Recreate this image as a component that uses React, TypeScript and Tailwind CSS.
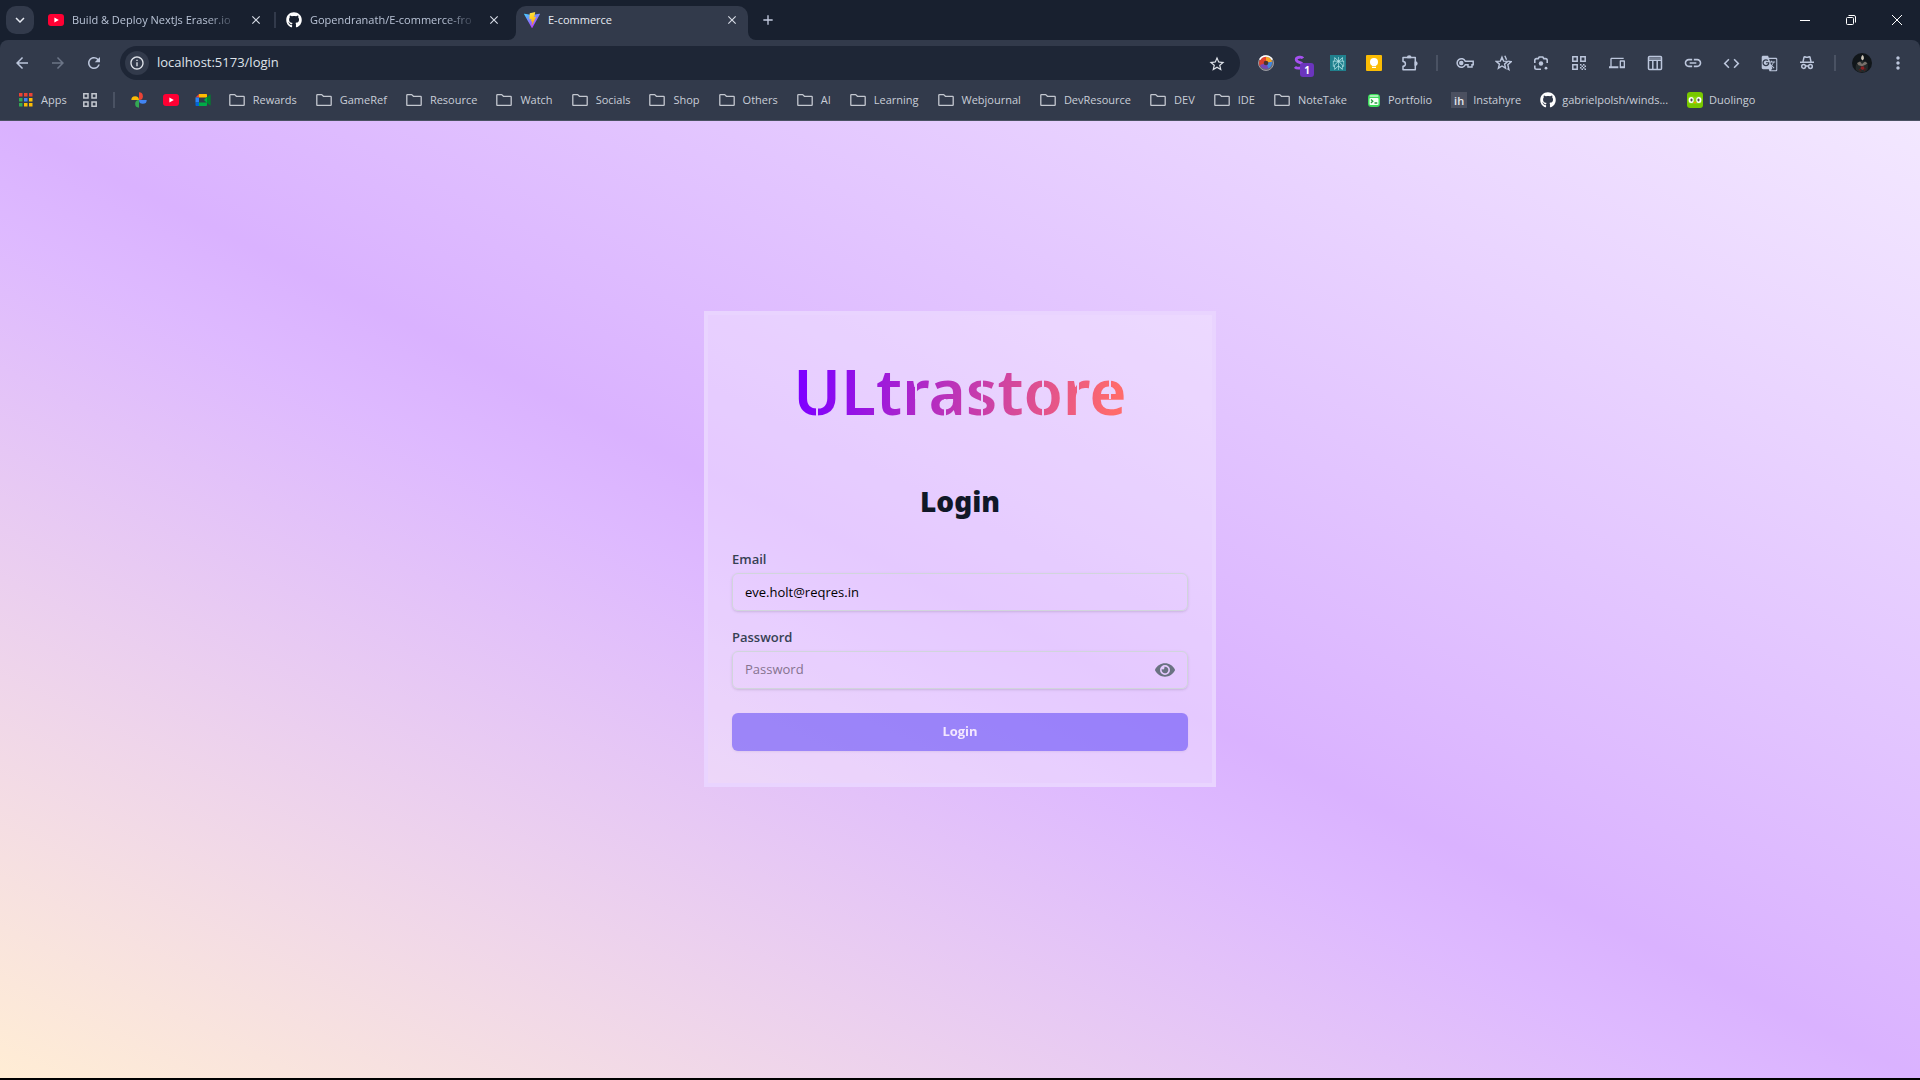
import { useState } from "react";
import type { ReactNode } from "react";
import { FaEye, FaGithub } from "react-icons/fa";
import {
  MdClose,
  MdCode,
  MdDevices,
  MdGTranslate,
  MdLink,
  MdOutlineInfo,
  MdRefresh,
  MdStarBorder,
  MdMoreVert,
  MdArrowBack,
  MdArrowForward,
  MdKeyboardArrowDown,
  MdAdd,
} from "react-icons/md";
import { SiPerplexity } from "react-icons/si";

const YouTubeIcon = () => (
  <svg viewBox="0 0 16 16" className="size-4 shrink-0" aria-hidden="true">
    <rect y="2" width="16" height="12" rx="3" fill="#ff0033" />
    <path d="M6.4 5.5v5L10.8 8z" fill="#fff" />
  </svg>
);

const ViteIcon = () => (
  <svg viewBox="0 0 16 16" className="size-4 shrink-0" aria-hidden="true">
    <defs>
      <linearGradient id="viteBody" x1="0" y1="0" x2="0.6" y2="1">
        <stop offset="0" stopColor="#41d1ff" />
        <stop offset="1" stopColor="#bd34fe" />
      </linearGradient>
      <linearGradient id="viteBolt" x1="0" y1="0" x2="0.2" y2="1">
        <stop offset="0" stopColor="#ffea83" />
        <stop offset="0.2" stopColor="#ffdd35" />
        <stop offset="1" stopColor="#ffa800" />
      </linearGradient>
    </defs>
    <path d="M15.9 2.3 8.4 15.7a.4.4 0 0 1-.7 0L.1 2.3c-.2-.3.1-.7.4-.6L8 3l7.4-1.3c.4 0 .7.3.5.6z" fill="url(#viteBody)" />
    <path d="M11.4.1 5.9 1.2a.2.2 0 0 0-.2.2l-.3 5.7c0 .1.1.2.3.2l1.5-.4c.1 0 .3.1.2.3l-.4 2.2c0 .2.1.3.2.2l1-.3c.1 0 .3.1.2.3l-.7 3.5c0 .2.2.3.3.1l4-8.2c.1-.1 0-.3-.2-.3l-1.5.3c-.2 0-.3-.1-.2-.3l1-3.3c0-.1-.1-.3-.3-.2z" fill="url(#viteBolt)" />
  </svg>
);

const FolderIcon = () => (
  <svg viewBox="0 0 16 16" className="size-4 shrink-0" fill="none" stroke="#c3c7cf" strokeWidth="1.3" strokeLinejoin="round" aria-hidden="true">
    <path d="M.8 3.2c0-.4.2-.6.6-.6h4.300l1.700 1.700h7.200c.4 0 .6.200.6.600v7.900c0 .4-.2.600-.6.600H1.400c-.4 0-.6-.2-.6-.6z" />
  </svg>
);

const APP_COLORS = ["#ea4335", "#ea4335", "#ea4335", "#34a853", "#4285f4", "#fbbc04", "#34a853", "#fbbc04", "#fbbc04"];

const AppsIcon = () => (
  <svg viewBox="0 0 14 14" className="size-3.5 shrink-0" aria-hidden="true">
    {APP_COLORS.map((c, i) => (
      <rect key={i} x={(i % 3) * 5} y={Math.floor(i / 3) * 5} width="3.5" height="3.5" fill={c} />
    ))}
  </svg>
);

const GridIcon = () => (
  <svg viewBox="0 0 14 14" className="size-3.5 shrink-0" fill="none" stroke="#c3c7cf" strokeWidth="1.5" aria-hidden="true">
    <path d="M.8.8h4.200v4.200H.8zM9 .8h4.200v4.200H9zM.8 9h4.200v4.200H.8zM9 9h4.200v4.200H9z" />
  </svg>
);

const PhotosIcon = () => (
  <svg viewBox="0 0 16 16" className="size-4 shrink-0" aria-hidden="true">
    <path d="M8 .3A3.850 3.850 0 0 1 8 8z" fill="#ea4335" />
    <path d="M.3 8A3.850 3.850 0 0 1 8 8z" fill="#fbbc04" />
    <path d="M8 15.700A3.850 3.850 0 0 1 8 8z" fill="#34a853" />
    <path d="M15.700 8A3.850 3.850 0 0 1 8 8z" fill="#4285f4" />
  </svg>
);

const MeetIcon = () => (
  <svg viewBox="0 0 16 16" className="size-4 shrink-0" aria-hidden="true">
    <path d="M4 2 .5 5.5H4z" fill="#ea4335" />
    <path d="M.5 5.5H4v5H.5z" fill="#2684fc" />
    <path d="M.5 10.5H4V14H1.600C1 14 .5 13.500.5 12.900z" fill="#0066da" />
    <path d="M4 2h7c.6 0 1 .4 1 1v2.500H4z" fill="#ffba00" />
    <path d="M4 10.5h8V13c0 .6-.4 1-1 1H4z" fill="#00ac47" />
    <path d="M12 5 15 2.700c.3-.2.600 0 .6.300v10c0 .4-.3.500-.6.300L12 11V10.500L9 8z" fill="#00832d" />
    <path d="M12 5v6L9 8z" fill="#00ac47" />
  </svg>
);

const PortfolioIcon = () => (
  <svg viewBox="0 0 16 16" className="size-4 shrink-0" aria-hidden="true">
    <rect x="2" y="2" width="12" height="13" rx="3.5" fill="#3ddc5b" />
    <rect x="3.500" y="3.300" width="9" height="1.500" rx=".7" fill="#c9f7d1" />
    <rect x="3.500" y="6" width="9" height="7" rx="1" fill="#f3fff5" />
    <path d="m5 7.500 1.800 1.700L5 11M8.500 11h2.800" stroke="#289c42" strokeWidth="1.300" fill="none" />
  </svg>
);

const InstahyreIcon = () => (
  <span className="grid size-4 shrink-0 place-items-center bg-[#4b5060] text-[11px] leading-none font-semibold text-gray-200" aria-hidden="true">
    ih
  </span>
);

const DuolingoIcon = () => (
  <svg viewBox="0 0 16 16" className="size-4 shrink-0" aria-hidden="true">
    <rect width="16" height="16" rx="3" fill="#78c800" />
    <path d="M.8 8c0-2.400 1.300-4 3.500-4C6 4 7 5 8 5s2-1 3.700-1c2.200 0 3.500 1.600 3.500 4 0 2.300-1.300 4-3.500 4-1.600 0-2.500-.8-3.700-.8S5.900 12 4.300 12C2.100 12 .8 10.300.8 8z" fill="#8ad60f" />
    <rect x="1.700" y="5" width="5" height="6" rx="2.500" fill="#fff" />
    <rect x="9.300" y="5" width="5" height="6" rx="2.500" fill="#fff" />
    <rect x="3.500" y="6.500" width="2" height="3" rx="1" fill="#4b4b4b" />
    <rect x="10.500" y="6.500" width="2" height="3" rx="1" fill="#4b4b4b" />
    <path d="M6.500 9.700h3L8 12z" fill="#ff9600" />
  </svg>
);

const LensBallIcon = () => (
  <svg viewBox="0 0 16 16" className="size-4" aria-hidden="true">
    <circle cx="8" cy="8" r="7.500" fill="#6a6a70" stroke="#9a9ba3" strokeWidth="1" />
    <path d="M8 8 2 11.500A7 7 0 0 1 3 3.500z" fill="#d9402f" />
    <path d="M3 3.500A7 7 0 0 1 9.500 1.600L8 8z" fill="#e8432e" />
    <path d="M8 1.800c3 0 5.500 2 6 5L8 8z" fill="#f5a623" />
    <path d="M14 6.800c.3 3-1.300 5.600-4 6.700L8 8z" fill="#3f86e0" />
    <path d="M10.500 13.500C7 14.500 3.500 13.500 2 10l6-2z" fill="#7747b8" />
    <circle cx="8" cy="8" r="2.300" fill="#4a3330" />
    <path d="M1.800 4.700A7 7 0 0 1 14.200 4.700" fill="none" stroke="#fff" strokeWidth="1.600" />
  </svg>
);

const SwirlIcon = () => (
  <span className="relative block size-4" aria-hidden="true">
    <svg viewBox="0 0 16 16" className="size-4" fill="none" stroke="#a550f0" strokeWidth="2.800">
      <path d="M9 3.200C8 1.800 2.200 1.600 2.200 4.600c0 3.600 6.500 2 6.500 5.600 0 3.300-5.700 3.800-7.700 1.700" />
    </svg>
    <span className="absolute top-2 left-1.5 grid size-3.5 place-items-center rounded-[3px] bg-[#6b35bd] text-[10px] leading-none font-bold text-white">
      1
    </span>
  </span>
);

const PerplexityIcon = () => (
  <span className="grid size-4 place-items-center bg-[#20808d] text-[#b9e6ea]">
    <SiPerplexity size={13} />
  </span>
);

const KeepIcon = () => (
  <svg viewBox="0 0 16 16" className="size-4" aria-hidden="true">
    <rect width="16" height="16" rx="1" fill="#fbbc04" />
    <circle cx="8" cy="7" r="4" fill="#fff" />
    <path d="M6 10h4v1.200H6zM6 12h4v1H6z" fill="#fff" />
  </svg>
);

const PuzzleIcon = () => (
  <svg viewBox="0 0 16 16" className="size-4" fill="none" stroke="currentColor" strokeWidth="1.500" strokeLinejoin="round" aria-hidden="true">
    <path d="M1 2.500h12.300v12.300H1v-3.500a2.400 2.400 0 0 0 0-4.800z" />
    <path d="M5.600 2.500a1.600 1.600 0 0 1 3.200 0zM13.300 7a1.600 1.600 0 0 1 0 3.200z" fill="currentColor" />
  </svg>
);

const KeyIcon = () => (
  <svg viewBox="0 0 18 18" className="size-[18px]" fill="none" stroke="currentColor" strokeWidth="1.500" aria-hidden="true">
    <path d="M9.300 7.200A4.300 4.300 0 1 0 9.300 10.800H12V13h4v-2.200h1.200V7.200z" />
    <circle cx="5.300" cy="9" r="1.500" fill="currentColor" />
  </svg>
);

const StarsIcon = () => (
  <svg viewBox="0 0 17 16" className="h-4 w-[17px]" fill="none" stroke="currentColor" strokeWidth="1.400" aria-hidden="true">
    <path d="m7 2.200 1.600 3.900 4.200.3-3.200 2.700 1 4.100L7 11l-3.600 2.200 1-4.100L1.200 6.400l4.200-.3z" />
    <path d="m9.800.8 1.800 4M13.300 6.400l2.900.3-3.400 3 1.100 4.900-1.500-.9" />
  </svg>
);

const LensSearchIcon = () => (
  <svg viewBox="0 0 16 16" className="size-4" fill="none" stroke="currentColor" strokeWidth="1.600" aria-hidden="true">
    <path d="M1.800 8V5.300c0-1 .7-1.700 1.700-1.700h1.700L6.200 2h3.600l1 1.600h1.700c1 0 1.700.7 1.700 1.700V8M1.800 10.500v2c0 1 .7 1.700 1.700 1.700H8" />
    <circle cx="8" cy="8.500" r="2.200" fill="currentColor" stroke="none" />
    <circle cx="13" cy="13.200" r="1.400" fill="currentColor" stroke="none" />
  </svg>
);

const QrIcon = () => (
  <svg viewBox="0 0 14 14" className="size-3.5" fill="none" stroke="currentColor" strokeWidth="1.500" aria-hidden="true">
    <path d="M.8.8h4.400v4.400H.8zM8.800.8h4.400v4.400H8.800zM.8 8.800h4.400v4.400H.8z" />
    <path d="M8 8h1.500v1.500H8zM11 8h1.500v1.500H11zM9.500 9.500H11V11H9.500zM12.500 9.500H14V11h-1.500zM8 11h1.500v1.500H8zM11 11h1.500v1.500H11zM9.500 12.500H11V14H9.500zM12.500 12.500H14V14h-1.500z" fill="currentColor" stroke="none" />
  </svg>
);

const ReadingIcon = () => (
  <svg viewBox="0 0 16 16" className="size-4" fill="none" stroke="currentColor" strokeWidth="1.500" aria-hidden="true">
    <rect x="1.500" y="1.500" width="13" height="13" rx="1" />
    <path d="M1.500 5.200h13M5.800 5.200v9.300M10.200 5.200v9.300" />
    <path d="M2 3.300h12" strokeOpacity="0.500" />
  </svg>
);

const IncognitoIcon = () => (
  <svg viewBox="0 0 16 16" className="size-4" fill="none" stroke="currentColor" strokeWidth="1.500" aria-hidden="true">
    <path d="M1 7.200h14M4 6.800l1-4.600c.1-.4.400-.5.800-.4l1.200.5h2l1.200-.5c.4-.1.700 0 .8.400l1 4.600" />
    <circle cx="4.600" cy="11.500" r="1.900" />
    <circle cx="11.400" cy="11.500" r="1.900" />
    <path d="M6.500 11h3" />
  </svg>
);

const Avatar = () => (
  <svg viewBox="0 0 20 20" className="size-5" aria-hidden="true">
    <circle cx="10" cy="10" r="10" fill="#11161a" />
    <path d="M4 17c-1-4 0-6 2.500-7.500L9 8l2 .2 3 1.300c2 1.500 2.500 3.500 1.500 7.500l-3 2.200H7z" fill="#242a2b" />
    <path d="M10.500 2c1.300 1 1.600 2.500 1.300 4L10.500 7.500 9.200 6c-.2-1.700.3-3 1.300-4z" fill="#cfc8bb" />
    <path d="m5 10 3-1.500L10 11l3-2.500 2.500 1.800-2 1.500-3.500 1.500-3.500-1z" fill="#77706a" />
    <path d="M9 13.500h3l.5 2.500-2 1-2-1.200z" fill="#8c2023" />
    <path d="m7 16 2 2.500M13.500 15l-1 3" stroke="#551a1c" />
  </svg>
);

type TabProps = { icon: ReactNode; title: string; active?: boolean };

function Tab({ icon, title, active = false }: TabProps) {
  return (
    <div className="flex h-full w-full min-w-0 items-center gap-2">
      {icon}
      <span
        className={
          active
            ? "min-w-0 flex-1 text-[#e6eaf2]"
            : "min-w-0 flex-1 [mask-image:linear-gradient(to_right,black_80%,transparent)] whitespace-nowrap text-[#b9c3d6]"
        }
      >
        {title}
      </span>
      <button type="button" aria-label={`Close ${title}`} className="grid size-4 shrink-0 place-items-center text-[#d5dae4]">
        <MdClose size={14} />
      </button>
    </div>
  );
}

function TabStrip() {
  return (
    <div className="flex h-10 items-stretch bg-[#18202f] text-[11px]">
      <div className="flex flex-1 items-stretch">
        <button type="button" aria-label="Search tabs" className="mt-1.5 ml-1.5 grid size-7 place-items-center rounded-[10px] bg-[#323a4b] text-[#e6eaf2]">
          <MdKeyboardArrowDown size={18} />
        </button>
        <div className="ml-3.5 w-[216px]">
          <Tab icon={<YouTubeIcon />} title="Build & Deploy NextJs Eraser.io" />
        </div>
        <div className="mx-2.5 h-4 w-0.5 self-center bg-[#323a4b]" />
        <div className="w-[216px]">
          <Tab icon={<FaGithub size={16} className="shrink-0 text-white" />} title="Gopendranath/E-commerce-fro" />
        </div>
        <div className="ml-1.5 flex w-2 flex-col justify-end bg-[#323a4b]">
          <div className="h-full rounded-br-[10px] bg-[#18202f]" />
        </div>
        <div className="flex w-[232px] items-end bg-[#18202f]">
          <div className="h-[34px] w-full rounded-t-[10px] bg-[#323a4b] pr-2 pb-1.5 pl-2">
            <Tab icon={<ViteIcon />} title="E-commerce" active />
          </div>
        </div>
        <div className="w-2 bg-[#323a4b]">
          <div className="h-full rounded-bl-[10px] bg-[#18202f]" />
        </div>
        <button type="button" aria-label="New tab" className="ml-0.5 grid w-5 place-items-center text-[#c3cbe0]">
          <MdAdd size={16} />
        </button>
      </div>
      <div className="flex text-white">
        <button type="button" aria-label="Minimize" className="grid w-[46px] place-items-center">
          <svg viewBox="0 0 10 10" className="size-2.5" stroke="currentColor"><path d="M0 5.500h10" /></svg>
        </button>
        <button type="button" aria-label="Restore" className="grid w-[46px] place-items-center">
          <svg viewBox="0 0 10 10" className="size-2.5" fill="none" stroke="currentColor">
            <rect x=".5" y="2.500" width="7" height="7" rx="1" />
            <path d="M2.500.5H8A1.500 1.500 0 0 1 9.500 2v5.500" />
          </svg>
        </button>
        <button type="button" aria-label="Close window" className="grid w-[46px] place-items-center">
          <svg viewBox="0 0 10 10" className="size-2.5" stroke="currentColor"><path d="m0 0 10 10M10 0 0 10" /></svg>
        </button>
      </div>
    </div>
  );
}

const EXTENSIONS = [
  { label: "Lens", icon: <LensBallIcon /> },
  { label: "Shortcuts", icon: <SwirlIcon /> },
  { label: "Perplexity", icon: <PerplexityIcon /> },
  { label: "Keep", icon: <KeepIcon /> },
  { label: "Extensions", icon: <PuzzleIcon /> },
];

const TOOLS = [
  { label: "Passwords", icon: <KeyIcon /> },
  { label: "Bookmarks", icon: <StarsIcon /> },
  { label: "Search with Lens", icon: <LensSearchIcon /> },
  { label: "QR code", icon: <QrIcon /> },
  { label: "Send to devices", icon: <MdDevices size={16} /> },
  { label: "Reading mode", icon: <ReadingIcon /> },
  { label: "Copy link", icon: <MdLink size={20} /> },
  { label: "Developer tools", icon: <MdCode size={19} /> },
  { label: "Translate", icon: <MdGTranslate size={17} /> },
  { label: "Incognito", icon: <IncognitoIcon /> },
];

function Toolbar() {
  return (
    <div className="bg-[#18202f]">
      <div className="flex h-[46px] items-center rounded-t-lg bg-[#323a4b] text-[#bcc6dc]">
        <div className="flex pl-1">
          <button type="button" aria-label="Back" className="grid w-9 place-items-center"><MdArrowBack size={18} /></button>
          <button type="button" aria-label="Forward" className="grid w-9 place-items-center text-[#6c7587]"><MdArrowForward size={18} /></button>
          <button type="button" aria-label="Reload" className="grid w-9 place-items-center"><MdRefresh size={18} /></button>
        </div>
        <div className="ml-2 flex h-[34px] flex-1 items-center rounded-full bg-[#1e2636] pr-4 pl-[5px]">
          <button type="button" aria-label="Site information" className="grid size-6 shrink-0 place-items-center rounded-full bg-[#323a4b] text-[#dfe3ea]">
            <MdOutlineInfo size={16} />
          </button>
          <input
            type="text"
            aria-label="Address"
            defaultValue="localhost:5173/login"
            className="ml-2 min-w-0 flex-1 bg-transparent text-[13px] text-[#dfe3ea] outline-none"
          />
          <button type="button" aria-label="Bookmark this tab" className="grid size-4 place-items-center text-[#dfe3ea]"><MdStarBorder size={18} className="shrink-0" /></button>
        </div>
        <div className="flex items-center pl-2">
          {EXTENSIONS.map((e) => (
            <button key={e.label} type="button" aria-label={e.label} className="grid w-9 place-items-center">{e.icon}</button>
          ))}
        </div>
        <div className="mx-2 h-4 w-0.5 bg-[#4a5263]" />
        <div className="flex items-center">
          {TOOLS.map((t) => (
            <button key={t.label} type="button" aria-label={t.label} className="grid w-[38px] place-items-center">{t.icon}</button>
          ))}
        </div>
        <div className="mx-2 h-4 w-0.5 bg-[#4a5263]" />
        <button type="button" aria-label="Profile" className="grid w-9 place-items-center"><Avatar /></button>
        <button type="button" aria-label="Menu" className="mr-1 grid w-9 place-items-center"><MdMoreVert size={20} /></button>
      </div>
    </div>
  );
}

const FOLDERS = [
  "Rewards", "GameRef", "Resource", "Watch", "Socials", "Shop", "Others", "AI",
  "Learning", "Webjournal", "DevResource", "DEV", "IDE", "NoteTake",
];

const SITES = [
  { label: "Portfolio", icon: <PortfolioIcon /> },
  { label: "Instahyre", icon: <InstahyreIcon /> },
  { label: "gabrielpolsh/winds...", icon: <FaGithub size={16} className="shrink-0 text-white" /> },
  { label: "Duolingo", icon: <DuolingoIcon /> },
];

function BookmarkBar() {
  return (
    <nav aria-label="Bookmarks" className="flex h-[35px] items-center border-b border-[#4a5263] bg-[#323a4b] pb-1.5 pl-[19px] text-[11px] whitespace-nowrap text-[#c9ced8]">
      <a href="#apps" className="flex items-center gap-2"><AppsIcon />Apps</a>
      <a href="#groups" aria-label="Tab groups" className="ml-4"><GridIcon /></a>
      <div className="mx-4 h-4 w-0.5 bg-[#4a5263]" />
      <div className="flex items-center gap-4">
        <a href="#photos" aria-label="Photos"><PhotosIcon /></a>
        <a href="#youtube" aria-label="YouTube"><YouTubeIcon /></a>
        <a href="#meet" aria-label="Meet"><MeetIcon /></a>
      </div>
      <div className="ml-[18px] flex items-center gap-[19px]">
        {FOLDERS.map((f) => (
          <a key={f} href={`#${f}`} className="flex items-center gap-2"><FolderIcon />{f}</a>
        ))}
        {SITES.map((s) => (
          <a key={s.label} href={`#${s.label}`} className="flex items-center gap-1.5">{s.icon}{s.label}</a>
        ))}
      </div>
    </nav>
  );
}

/* Stencil bridges: the first mask layer cuts the upper half of the letters, the second the lower half. */
const STENCIL =
  "[mask-image:linear-gradient(to_right,#000_122px,#0000_122px_124px,#000_124px_188px,#0000_188px_190px,#000_190px_249px,#0000_249px_251px,#000_251px_284px,#0000_284px_286px,#000_286px_316px,#0000_316px_318px,#000_318px),linear-gradient(to_right,#000_23px,#0000_23px_25px,#000_25px_151px,#0000_151px_153px,#000_153px_188px,#0000_188px_190px,#000_190px_249px,#0000_249px_251px,#000_251px)] [mask-size:100%_52px,100%_36px] [mask-position:top,bottom] [mask-repeat:no-repeat]";

function LoginCard() {
  const [visible, setVisible] = useState(false);
  return (
    <section className="w-full max-w-lg border-4 border-purple-200 bg-white/30 p-6 pb-8">
      <div className="flex h-[104px] items-center justify-center">
        <h1
          className={`bg-[linear-gradient(100deg,#7f00ff_5%,#ff6b6b_95%)] bg-clip-text font-['Noto_Sans'] text-[64px] leading-[88px] font-semibold text-transparent ${STENCIL}`}
        >
          ULtrastore
        </h1>
      </div>
      <h2 className="mt-10 text-center font-['Noto_Sans'] text-[28px] leading-9 font-black text-gray-900">Login</h2>
      <form className="mt-[30px] flex flex-col" onSubmit={(e) => e.preventDefault()}>
        <label htmlFor="email" className="text-[13px] leading-5 font-semibold text-gray-700">Email</label>
        <input
          id="email"
          type="email"
          defaultValue="eve.holt@reqres.in"
          className="mt-1 h-[38px] rounded-md border border-gray-300 px-3 text-[13px] text-black shadow-sm outline-none"
        />
        <label htmlFor="password" className="mt-4 text-[13px] leading-5 font-semibold text-gray-700">Password</label>
        <div className="mt-1 flex h-[38px] items-center rounded-md border border-gray-300 px-3 shadow-sm">
          <input
            id="password"
            type={visible ? "text" : "password"}
            placeholder="Password"
            className="min-w-0 flex-1 bg-transparent text-[13px] text-black outline-none placeholder:text-[#85738f]"
          />
          <button type="button" aria-label="Show password" onClick={() => setVisible(!visible)} className="text-gray-500">
            <FaEye size={20} />
          </button>
        </div>
        <button type="submit" className="mt-6 h-[38px] rounded-md bg-indigo-600 text-[13px] font-bold text-white opacity-50 shadow-sm">
          Login
        </button>
      </form>
    </section>
  );
}

export default function App() {
  return (
    <div className="flex h-screen min-h-[800px] flex-col border-b-2 border-black font-['Open_Sans',sans-serif]">
      <header>
        <TabStrip />
        <Toolbar />
        <BookmarkBar />
      </header>
      <main className="flex flex-1 items-center justify-center bg-linear-to-tr from-orange-100 via-purple-300 to-purple-100 pb-[101px]">
        <LoginCard />
      </main>
    </div>
  );
}
